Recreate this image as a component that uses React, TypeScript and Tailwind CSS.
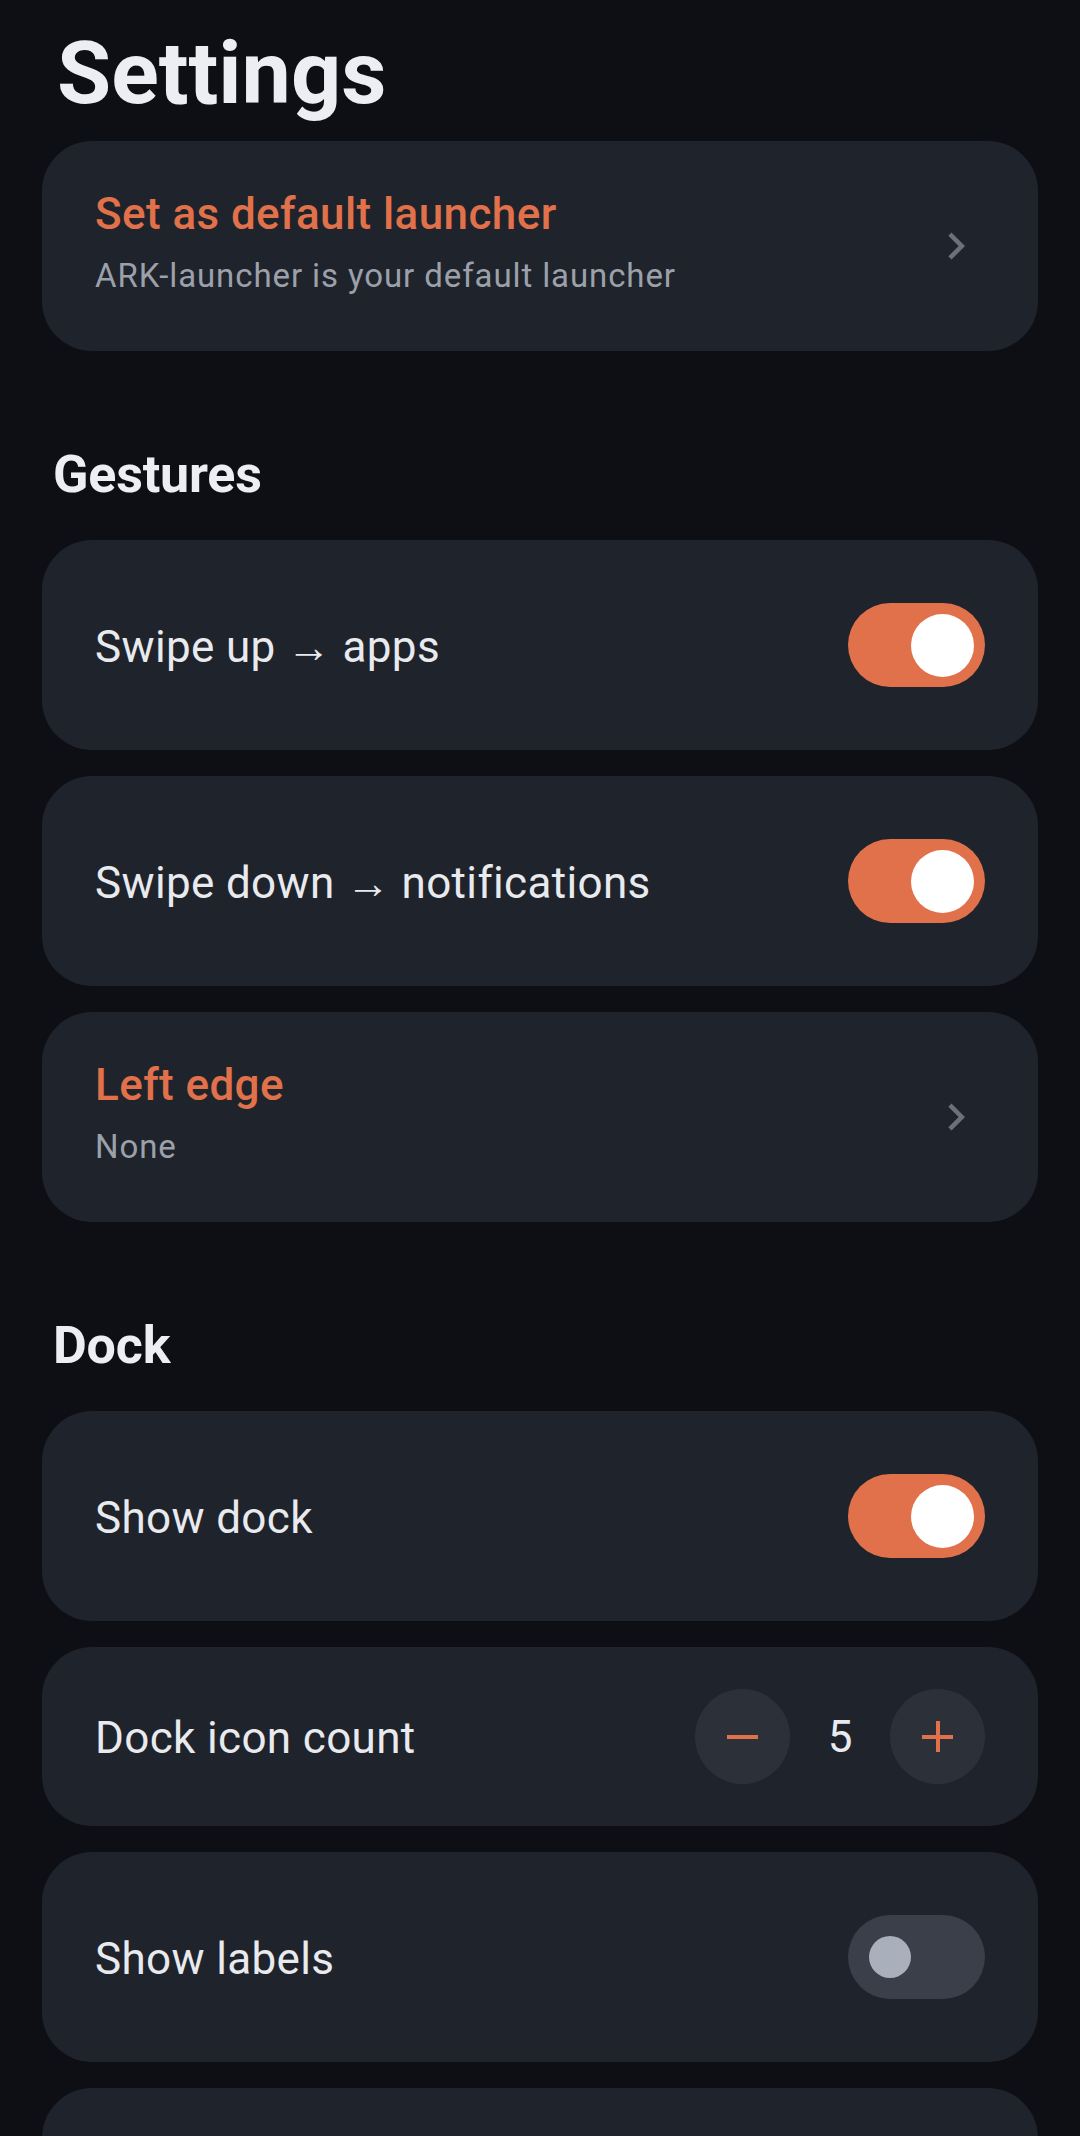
import React from "react";

const font = { fontFamily: "Roboto, 'Noto Sans', sans-serif" };

function Chevron() {
  return (
    <svg width="54" height="54" viewBox="0 0 24 24" className="text-[#6b707a]" fill="currentColor">
      <path d="M8.59 16.59 13.17 12 8.59 7.41 10 6l6 6-6 6-1.41-1.41z" />
    </svg>
  );
}

function Toggle({ on }: { on: boolean }) {
  if (on) {
    return (
      <div className="w-[137px] h-[84px] rounded-full bg-[#e0714a] flex items-center justify-end pr-[11px] shrink-0">
        <div className="w-[63px] h-[63px] rounded-full bg-white"></div>
      </div>
    );
  }
  return (
    <div className="w-[137px] h-[84px] rounded-full bg-[#3a3f49] flex items-center pl-[21px] shrink-0">
      <div className="w-[42px] h-[42px] rounded-full bg-[#a9b0bb]"></div>
    </div>
  );
}

function LinkCard({ title, sub }: { title: string; sub: string }) {
  return (
    <div className="bg-[#1f232b] rounded-[50px] pl-[53px] pr-[72px] pt-[47px] pb-[55px] flex items-center justify-between">
      <div>
        <div className="text-[44px] leading-[52px] font-medium text-[#e0714a] tracking-[0.4px]">{title}</div>
        <div className="mt-[16px] text-[33px] leading-[40px] text-[#9ca0aa] tracking-[0.9px]">{sub}</div>
      </div>
      <div className="-mr-[17px] mt-[8px]">
        <Chevron />
      </div>
    </div>
  );
}

function ToggleCard({ label, on }: { label: string; on: boolean }) {
  return (
    <div className="bg-[#1f232b] rounded-[50px] px-[53px] h-[210px] flex items-center justify-between">
      <div className="mt-[3px] text-[44px] leading-[52px] text-[#e9eaee] tracking-[0.35px]">{label}</div>
      <Toggle on={on} />
    </div>
  );
}

function Header({ children }: { children: React.ReactNode }) {
  return (
    <div className="mt-[92px] mb-[33px] pl-[11px] text-[52px] leading-[64px] font-bold text-[#eceef2] tracking-[-0.2px]">{children}</div>
  );
}

export default function App() {
  return (
    <div className="w-[1080px] h-[2136px] overflow-hidden bg-[#0d0f14]" style={font}>
      <div className="px-[42px]">
        <div className="pt-[21px] mb-[16px] pl-[15px] text-[88px] leading-[104px] font-bold text-[#eceef2]">Settings</div>

        <LinkCard title="Set as default launcher" sub="ARK-launcher is your default launcher" />

        <Header>Gestures</Header>
        <div className="flex flex-col gap-[26px]">
          <ToggleCard label="Swipe up → apps" on={true} />
          <ToggleCard label="Swipe down → notifications" on={true} />
          <LinkCard title="Left edge" sub="None" />
        </div>

        <Header>Dock</Header>
        <div className="flex flex-col gap-[26px]">
          <ToggleCard label="Show dock" on={true} />
          <div className="bg-[#1f232b] rounded-[50px] px-[53px] h-[179px] flex items-center justify-between">
            <div className="mt-[3px] text-[44px] leading-[52px] text-[#e9eaee] tracking-[0.35px]">Dock icon count</div>
            <div className="flex items-center">
              <div className="w-[95px] h-[95px] rounded-full bg-[#2c3039] flex items-center justify-center">
                <div className="w-[31px] h-[4px] bg-[#e0714a]"></div>
              </div>
              <div className="w-[100px] text-center text-[44px] leading-[52px] text-[#e9eaee]">5</div>
              <div className="w-[95px] h-[95px] rounded-full bg-[#2c3039] flex items-center justify-center relative">
                <div className="w-[31px] h-[4px] bg-[#e0714a]"></div>
                <div className="absolute w-[4px] h-[31px] bg-[#e0714a]"></div>
              </div>
            </div>
          </div>
          <ToggleCard label="Show labels" on={false} />
          {/* next card, scrolled below the fold */}
          <div className="bg-[#1f232b] rounded-[50px] h-[210px]"></div>
        </div>
      </div>
    </div>
  );
}
